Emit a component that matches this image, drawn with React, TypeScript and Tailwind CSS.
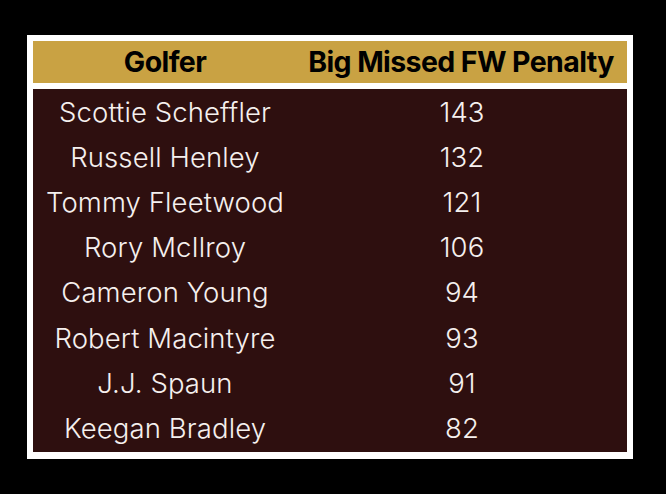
import React from 'react'

const rows: [string, number][] = [
  ['Scottie Scheffler', 143],
  ['Russell Henley', 132],
  ['Tommy Fleetwood', 121],
  ['Rory McIlroy', 106],
  ['Cameron Young', 94],
  ['Robert Macintyre', 93],
  ['J.J. Spaun', 91],
  ['Keegan Bradley', 82],
]

export default function App() {
  return (
    <div
      className="w-[666px] h-[494px] bg-black pt-[35px] pl-[27px]"
      style={{ fontFamily: 'Inter, "Liberation Sans", sans-serif' }}
    >
      <div className="w-[606px] h-[424px] bg-white p-[6px] flex flex-col gap-[6px]">
        <div className="h-[42px] bg-[#c9a243] flex items-center text-black font-bold text-[28.5px] tracking-[-0.6px]">
          <div className="w-[264px] text-center">Golfer</div>
          <div className="flex-1 text-center pr-[2px]">Big Missed FW Penalty</div>
        </div>
        <div className="h-[363px] bg-[#2e0f0f] flex flex-col py-[1px] text-[#f5f0ee] text-[27.5px] font-light tracking-[0.1px]">
          {rows.map(([name, value]) => (
            <div key={name} className="flex-1 flex items-center">
              <div className="w-[264px] text-center">{name}</div>
              <div className="flex-1 text-center">{value}</div>
            </div>
          ))}
        </div>
      </div>
    </div>
  )
}
